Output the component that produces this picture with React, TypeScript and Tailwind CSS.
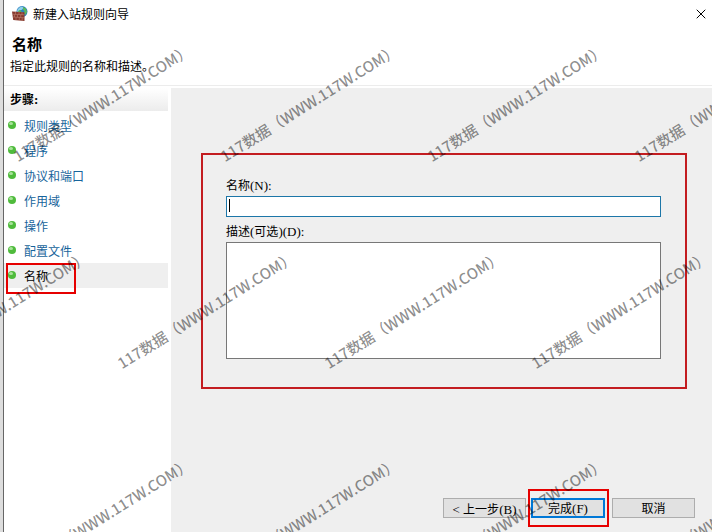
import type { ReactNode } from 'react'
import { X } from 'lucide-react'

const steps = ['规则类型', '程序', '协议和端口', '作用域', '操作', '配置文件', '名称']

const stamps = [
  { left: -2, top: 89 },
  { left: 205, top: 89 },
  { left: 412, top: 89 },
  { left: 619, top: 89 },
  { left: -105, top: 296 },
  { left: 102, top: 296 },
  { left: 309, top: 296 },
  { left: 516, top: 296 },
  { left: -2, top: 503 },
  { left: 205, top: 503 },
  { left: 412, top: 503 },
  { left: 619, top: 503 },
]

function FirewallIcon() {
  return (
    <svg className="h-4 w-4" viewBox="0 0 16 16" aria-hidden="true">
      <circle cx="10" cy="5.6" r="5.5" fill="#2a7fc0" />
      <path d="M5.5 3.5Q7 .8 10 .4l1.5 1.4-1.5 2-2 .4-1 2H5z" fill="#8fd0ea" />
      <path d="M11 1l3 1.6 1 3.4-1.5 3-1.5-2 .5-2L11 3.8z" fill="#5cb85a" />
      <path d="M7 4l2 .4.5 1.6H6z" fill="#5cb85a" />
      <path d="M0 5.5l12.5.8V15L1.2 14z" fill="#873a2e" />
      <path
        d="M.4 8.2l12 .6M.8 11l11.6.8M3.5 5.8v2.6M7 6v2.6M10 6.2v2.6M2.5 8.4V11M5.5 8.6v2.8M8.7 8.7v2.8M4 11.3v2.9M7.3 11.5v3M10.2 11.6v3"
        stroke="#c88f7e"
        strokeWidth=".5"
      />
    </svg>
  )
}

function Bullet() {
  return (
    <svg className="mb-0.5 h-2 w-2 shrink-0" viewBox="0 0 8 8" aria-hidden="true">
      <circle cx="4" cy="4" r="4" fill="#4fbb3c" />
      <ellipse cx="3" cy="2.5" rx="2" ry="1.5" fill="#a9e39b" />
    </svg>
  )
}

// Latin characters are set in a serif face next to the Chinese text
function Latin({ children }: { children: ReactNode }) {
  return <span className="font-['Liberation_Serif',serif] text-[13px] leading-none">{children}</span>
}

function Watermark() {
  return (
    <div className="pointer-events-none absolute inset-0 overflow-hidden" aria-hidden="true">
      {stamps.map((s) => (
        <span
          key={`${s.left}-${s.top}`}
          className="absolute w-52 -rotate-[32deg] text-center font-['Noto_Sans_CJK_SC',sans-serif] text-[15px] leading-7 font-medium whitespace-nowrap text-black/45"
          style={{ left: s.left, top: s.top }}
        >
          117数据（WWW.117W.COM）
        </span>
      ))}
    </div>
  )
}

export default function App() {
  return (
    <div className="relative flex min-h-screen overflow-hidden bg-white font-['Noto_Sans_CJK_SC',sans-serif] text-xs text-black">
      <div className="w-1 shrink-0 border-r border-[#666] bg-[#ddd]" />
      <div className="flex min-w-0 flex-1 flex-col">
        <header className="h-[86px] border-b border-[#ececec]">
          <div className="flex h-7 items-center justify-between pr-[3px] pl-2">
            <div className="flex items-center gap-[5px]">
              <FirewallIcon />
              <span>新建入站规则向导</span>
            </div>
            <button type="button" aria-label="关闭">
              <X className="size-4" strokeWidth={1.5} />
            </button>
          </div>
          <h1 className="mt-1 pl-2 text-[15px] leading-6 font-bold">名称</h1>
          <p className="pl-1.5 leading-5">指定此规则的名称和描述。</p>
        </header>

        <div className="flex flex-1 pt-0.5">
          <nav className="w-[164px] shrink-0" aria-label="步骤">
            <h2 className="h-[23px] bg-linear-to-b from-white to-[#ececec] pl-1.5 leading-[22px] font-bold">
              步骤<Latin>:</Latin>
            </h2>
            <ul className="pt-0.5">
              {steps.map((step, i) => {
                const current = i === steps.length - 1
                return (
                  <li key={step} className={current ? 'relative bg-[#efefef]' : ''}>
                    <a
                      href="#"
                      aria-current={current ? 'step' : undefined}
                      className={`flex h-[25px] items-center gap-2 pl-1 ${current ? 'text-black' : 'text-[#17649b]'}`}
                    >
                      <Bullet />
                      {step}
                    </a>
                    {current && (
                      <span className="pointer-events-none absolute top-0 left-0.5 h-[31px] w-[70px] border-2 border-[#e60000]" />
                    )}
                  </li>
                )
              })}
            </ul>
          </nav>

          <main className="ml-[3px] flex flex-1 flex-col justify-between bg-[#efefef] pt-[65px] pr-[17px] pb-[14px] pl-[30px]">
            <div className="mr-2 flex h-[236px] flex-col border-2 border-[#c31c20] pt-[22px] pr-6 pl-[23px]">
              <label htmlFor="name" className="h-4 leading-4">
                名称<Latin>(N):</Latin>
              </label>
              <div className="relative mt-[3px] h-[21px]">
                <input
                  id="name"
                  className="block h-full w-full border border-[#1c76a8] bg-white px-1 caret-transparent outline-none"
                />
                <span className="pointer-events-none absolute top-[3px] left-[3px] h-[13px] w-px bg-black" />
              </div>
              <label htmlFor="description" className="mt-1.5 h-4 leading-4">
                描述<Latin>(</Latin>可选<Latin>)(D):</Latin>
              </label>
              <textarea
                id="description"
                className="mt-[3px] h-[117px] w-full resize-none border border-[#777] bg-white p-0.5 outline-none"
              />
            </div>

            <div className="flex items-center justify-end">
              <button type="button" className="h-5 w-[83px] border border-[#adadad] bg-[#e1e1e1] pt-0.5 leading-4">
                <Latin>&lt; </Latin>上一步<Latin>(B)</Latin>
              </button>
              <div className="-my-[9px] ml-0.5 border-2 border-[#e60000] py-[7px] pr-0.5 pl-px">
                <button type="button" className="block h-5 w-[74px] border-2 border-[#0078d7] bg-[#e1e1e1] leading-4">
                  完成<Latin>(F)</Latin>
                </button>
              </div>
              <button type="button" className="ml-[3px] h-5 w-[83px] border border-[#adadad] bg-[#e1e1e1] leading-4">
                取消
              </button>
            </div>
          </main>
        </div>
      </div>
      <Watermark />
    </div>
  )
}
